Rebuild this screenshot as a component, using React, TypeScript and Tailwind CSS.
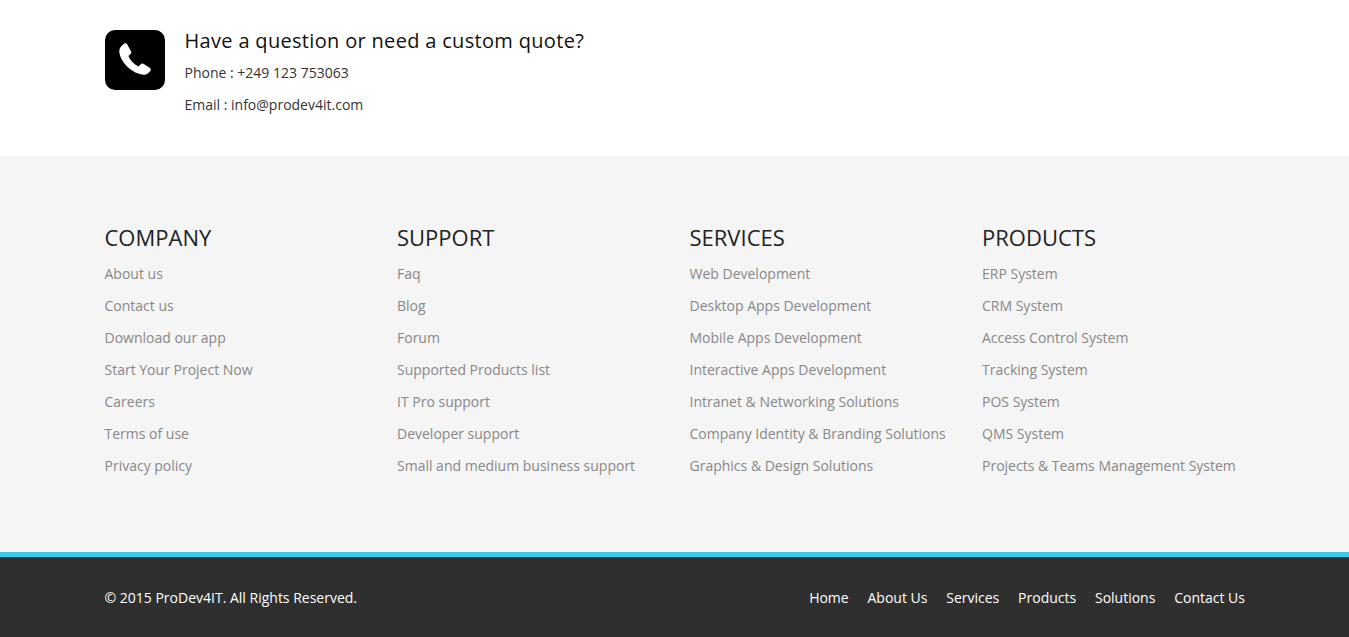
const cols = [
  { t: "COMPANY", w: "w-[292.5px]", i: ["About us", "Contact us", "Download our app", "Start Your Project Now", "Careers", "Terms of use", "Privacy policy"] },
  { t: "SUPPORT", w: "w-[292.5px]", i: ["Faq", "Blog", "Forum", "Supported Products list", "IT Pro support", "Developer support", "Small and medium business support"] },
  { t: "SERVICES", w: "w-[292.5px]", i: ["Web Development", "Desktop Apps Development", "Mobile Apps Development", "Interactive Apps Development", "Intranet & Networking Solutions", "Company Identity & Branding Solutions", "Graphics & Design Solutions"] },
  { t: "PRODUCTS", w: "w-[262px]", i: ["ERP System", "CRM System", "Access Control System", "Tracking System", "POS System", "QMS System", "Projects & Teams Management System"] },
];
const nav = ["Home", "About Us", "Services", "Products", "Solutions", "Contact Us"];

export default function App() {
  return (
    <div className="w-full bg-white font-['Open_Sans',sans-serif] text-[14px]">
      <section className="h-[156px] pt-[30px] pl-[104.5px] flex">
        <div className="w-[60px] h-[60px] rounded-[10px] bg-black flex items-center justify-center shrink-0">
          <svg width="36" height="36" viewBox="0 0 24 24" fill="white">
            <path d="M6.600 1.200 9.400 6.300c.3.500.2 1.100-.2 1.500L7.600 9.300c1.300 3 3.600 5.500 6.700 7l1.700-1.600c.4-.4 1-.5 1.500-.2l4.500 2.900c.6.4.7 1.100.3 1.700-1 1.400-2.500 2.800-4.300 2.700C10.500 21.400 2.000 13.500 1.500 6.100 1.400 4.300 3.000 2.400 4.800 1c.6-.4 1.400-.3 1.800.2z" />
          </svg>
        </div>
        <div className="ml-5 text-[#333]">
          <h3 className="text-[20px] leading-[22px] font-medium tracking-[0.32px] text-[#111] mb-[10px]">Have a question or need a custom quote?</h3>
          <p className="leading-[22px] mb-[10px]">Phone : +249 123 753063</p>
          <p className="leading-[22px]">Email : info@prodev4it.com</p>
        </div>
      </section>
      <section className="h-[396px] bg-[#f5f5f5] pt-[67px] pl-[104.5px] flex">
        {cols.map((c) => (
          <div key={c.t} className={c.w}>
            <h4 className="text-[22px] leading-[28px] font-normal text-[#222] mb-[7px]">{c.t}</h4>
            <ul className="text-[#888]">
              {c.i.map((x) => <li key={x} className="h-[32px] leading-[32px] whitespace-nowrap">{x}</li>)}
            </ul>
          </div>
        ))}
      </section>
      <footer className="h-[85px] bg-[#2f2f2f] border-t-[5px] border-[#3ccbe8] pl-[104.5px] pr-[104px] flex items-center justify-between text-white">
        <span>© 2015 ProDev4IT. All Rights Reserved.</span>
        <nav className="flex gap-[18.8px]">
          {nav.map((n) => <a key={n}>{n}</a>)}
        </nav>
      </footer>
    </div>
  );
}
